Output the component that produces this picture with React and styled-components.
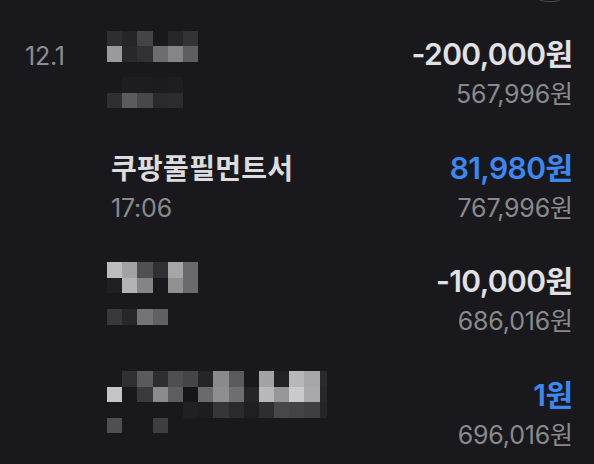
import React from "react";
import styled, { createGlobalStyle } from "styled-components";

const Global = createGlobalStyle`
  html, body { margin: 0; padding: 0; background: #19191d; }
  body { font-family: Inter, "Noto Sans CJK KR", sans-serif; -webkit-font-smoothing: antialiased; }
`;

const Screen = styled.div`
  position: relative;
  width: 594px;
  height: 464px;
  overflow: hidden;
  background: #19191d;
`;

const FloatingPill = styled.div`
  position: absolute;
  top: -28px;
  right: 26px;
  width: 36px;
  height: 30px;
  border: 1.5px solid #48484c;
  border-radius: 14px;
  box-sizing: border-box;
`;

const List = styled.div`
  display: flex;
  flex-direction: column;
  padding: 0 21px 0 25px;
`;

const Row = styled.div`
  display: grid;
  grid-template-columns: 82px 1fr auto;
  grid-template-rows: 38px 41px;
  align-items: baseline;
  height: 113.5px;
  padding-top: 34px;
  box-sizing: border-box;
`;

const DateLabel = styled.div`
  grid-column: 1;
  grid-row: 1;
  font-family: Inter, sans-serif;
  font-size: 25px;
  line-height: 36px;
  color: #8c8c90;
  letter-spacing: -0.2px;
`;

const Title = styled.div`
  grid-column: 2;
  grid-row: 1;
  padding-left: 4px;
  font-family: "Noto Sans CJK KR", sans-serif;
  font-weight: 600;
  font-size: 28px;
  line-height: 36px;
  letter-spacing: 0.3px;
  color: #dcdcde;
`;

const Time = styled.div`
  grid-column: 2;
  grid-row: 2;
  padding-left: 4px;
  font-family: Inter, sans-serif;
  font-size: 25px;
  line-height: 41px;
  color: #8a8a8e;
  letter-spacing: -0.2px;
`;

const Amount = styled.div`
  grid-column: 3;
  grid-row: 1;
  justify-self: end;
  font-family: Inter, "Noto Sans CJK KR", sans-serif;
  font-weight: 600;
  font-size: 30px;
  line-height: 36px;
  letter-spacing: -0.6px;
  color: ${(p) => (p.$positive ? "#3b88f3" : "#e1e1e3")};
`;

const Balance = styled.div`
  grid-column: 3;
  grid-row: 2;
  justify-self: end;
  font-family: Inter, "Noto Sans CJK KR", sans-serif;
  font-size: 25px;
  line-height: 41px;
  letter-spacing: -0.2px;
  color: #8a8a8e;
`;

const Won = styled.span`
  font-family: "Noto Sans CJK KR", sans-serif;
  letter-spacing: 0;
`;

const Mosaic = styled.div`
  grid-column: 2;
  grid-row: 1 / span 2;
  align-self: start;
  margin-top: ${(p) => p.$top}px;
  display: grid;
  grid-template-columns: ${(p) => p.$cols};
  grid-auto-rows: ${(p) => p.$rowH}px;
`;

const Cell = styled.div`
  background: ${(p) => p.$c || "transparent"};
`;

const rows = [
  {
    date: "12.1",
    amount: "-200,000",
    balance: "567,996",
    mosaic: {
      top: -3,
      rowH: 15.4,
      cols: "repeat(6, 15.2px)",
      cells: [
        ["#2e2e32", "#252529", "#444448", null, "#27272b", "#333337"],
        ["#9a9a9c", "#28282c", "#313135", "#6d6d70", "#858588", "#5e5e62"],
        [null, null, null, null, null, null],
        [null, "#1d1d21", "#1d1d21", "#1c1c20", "#1e1e22", null],
        ["#2f2f33", "#5b5b5f", "#48484c", "#2a2a2e", "#2c2c30", null],
      ],
    },
  },
  {
    title: "쿠팡풀필먼트서",
    time: "17:06",
    amount: "81,980",
    positive: true,
    balance: "767,996",
  },
  {
    amount: "-10,000",
    balance: "686,016",
    mosaic: {
      top: 1,
      rowH: 15.7,
      cols: "repeat(6, 15.2px)",
      cells: [
        ["#bdbdbe", "#a2a2a4", "#505054", "#303034", "#a6a6a8", "#6a6a6d"],
        ["#1f1f23", "#b3b3b5", "#848487", null, "#909093", "#6a6a6d"],
        [null, null, null, null, null, null],
        ["#38383c", "#27272b", "#747477", "#616165", null, null],
      ],
    },
  },
  {
    amount: "1",
    positive: true,
    balance: "696,016",
    mosaic: {
      top: -3.5,
      rowH: 15.5,
      cols: "repeat(14, 15.2px) 7px",
      cells: [
        [null, "#303034", "#5a5a5e", "#2e2e32", "#4e4e52", "#454549", "#252529", "#8a8a8d", "#5b5b5f", null, "#a3a3a5", "#222226", "#b7b7b9", "#a6a6a8", "#2a2a2e"],
        ["#c5c5c7", null, "#3a3a3e", "#8b8b8e", "#5d5d61", "#161619", "#6a6a6d", "#8e8e91", "#6e6e71", "#252529", "#b8b8ba", "#97979a", "#cacacc", "#a9a9ab", "#27272b"],
        [null, null, null, null, null, "#202024", "#1d1d21", "#363639", "#2a2a2e", "#1f1f23", "#2e2e32", "#47474b", "#444448", "#3f3f43", "#252529"],
        ["#4f4f53", null, null, "#3e3e42", null, null, null, null, null, null, null, null, null, null, null],
      ],
    },
  },
];

function Money({ value }) {
  return (
    <>
      {value}
      <Won>원</Won>
    </>
  );
}

export default function App() {
  return (
    <>
      <Global />
      <Screen>
        <FloatingPill />
        <List>
          {rows.map((r, i) => (
            <Row key={i}>
              {r.date && <DateLabel>{r.date}</DateLabel>}
              {r.title && <Title>{r.title}</Title>}
              {r.time && <Time>{r.time}</Time>}
              {r.mosaic && (
                <Mosaic $top={r.mosaic.top} $rowH={r.mosaic.rowH} $cols={r.mosaic.cols}>
                  {r.mosaic.cells.flatMap((line, y) =>
                    line.map((c, x) => <Cell key={`${y}-${x}`} $c={c} />)
                  )}
                </Mosaic>
              )}
              <Amount $positive={r.positive}>
                <Money value={r.amount} />
              </Amount>
              <Balance>
                <Money value={r.balance} />
              </Balance>
            </Row>
          ))}
        </List>
      </Screen>
    </>
  );
}
